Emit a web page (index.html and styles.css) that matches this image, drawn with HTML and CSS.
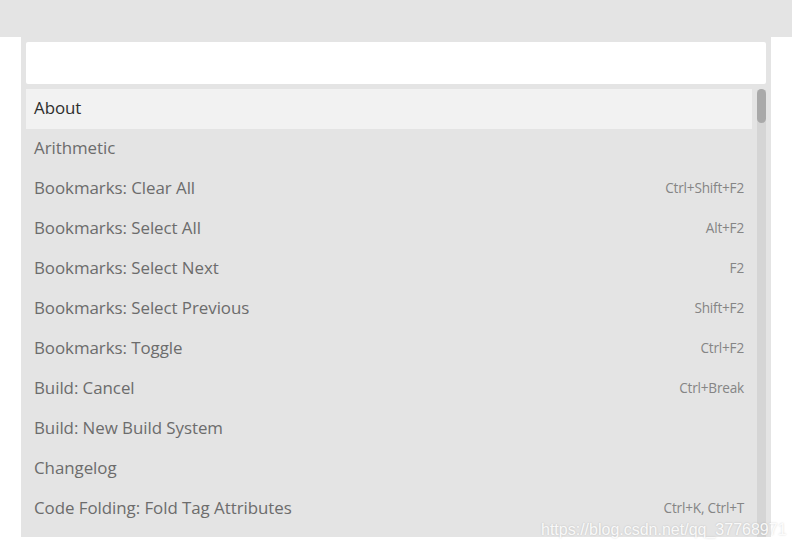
FILE: index.html
```html
<!DOCTYPE html>
<html>
<head>
<meta charset="utf-8">
<link rel="stylesheet" href="styles.css">
</head>
<body>
<div class="topbar"></div>
<div class="stage">
  <div class="panel">
    <div class="search"></div>
    <div class="listwrap">
      <ul class="list">
        <li class="item selected"><span class="name">About</span></li>
        <li class="item"><span class="name">Arithmetic</span></li>
        <li class="item"><span class="name">Bookmarks: Clear All</span><span class="key">Ctrl+Shift+F2</span></li>
        <li class="item"><span class="name">Bookmarks: Select All</span><span class="key">Alt+F2</span></li>
        <li class="item"><span class="name">Bookmarks: Select Next</span><span class="key">F2</span></li>
        <li class="item"><span class="name">Bookmarks: Select Previous</span><span class="key">Shift+F2</span></li>
        <li class="item"><span class="name">Bookmarks: Toggle</span><span class="key">Ctrl+F2</span></li>
        <li class="item"><span class="name">Build: Cancel</span><span class="key">Ctrl+Break</span></li>
        <li class="item"><span class="name">Build: New Build System</span></li>
        <li class="item"><span class="name">Changelog</span></li>
        <li class="item"><span class="name">Code Folding: Fold Tag Attributes</span><span class="key">Ctrl+K, Ctrl+T</span></li>
      </ul>
      <div class="scrollbar"><div class="thumb"></div></div>
    </div>
  </div>
</div>
<div class="watermark">https://blog.csdn.net/qq_37768971</div>
</body>
</html>
```
FILE: styles.css
```css
html, body {
  margin: 0;
  padding: 0;
  background: #ffffff;
  width: 792px;
  height: 551px;
  overflow: hidden;
  font-family: "Open Sans", "Noto Sans", sans-serif;
}
.topbar {
  height: 37px;
  background: #e4e4e4;
}
.stage {
  padding-left: 21px;
  width: 750px;
}
.panel {
  background: #e4e4e4;
  height: 500px;
  padding: 5px 5px 0 5px;
  box-sizing: border-box;
  display: flex;
  flex-direction: column;
  gap: 5px;
}
.search {
  height: 42px;
  background: #ffffff;
  border-radius: 2px;
  flex: none;
}
.listwrap {
  flex: 1;
  display: flex;
  gap: 5px;
  overflow: hidden;
  min-height: 0;
}
.list {
  list-style: none;
  margin: 0;
  padding: 0;
  flex: 1;
}
.item {
  height: 40px;
  box-sizing: border-box;
  display: flex;
  align-items: center;
  justify-content: space-between;
  padding: 0 8px 4px 8px;
  color: #6c6c6c;
}
.item.selected {
  background: #f2f2f2;
  color: #2e2e2e;
}
.name {
  font-size: 16.9px;
  letter-spacing: -0.05px;
}
.key {
  font-size: 13.6px;
  color: #858585;
  letter-spacing: -0.2px;
}
.scrollbar {
  width: 9px;
  background: #d5d5d5;
  flex: none;
  border-radius: 4px 4px 0 0;
}
.thumb {
  height: 34px;
  background: #a9a9a9;
  border-radius: 5px;
}
.watermark {
  position: absolute;
  left: 541px;
  top: 521px;
  white-space: nowrap;
  font-family: "Liberation Sans", Arial, sans-serif;
  font-size: 16px;
  color: rgba(255, 255, 255, 0.9);
  text-shadow: 0 0 2px rgba(0, 0, 0, 0.18);
}
```
